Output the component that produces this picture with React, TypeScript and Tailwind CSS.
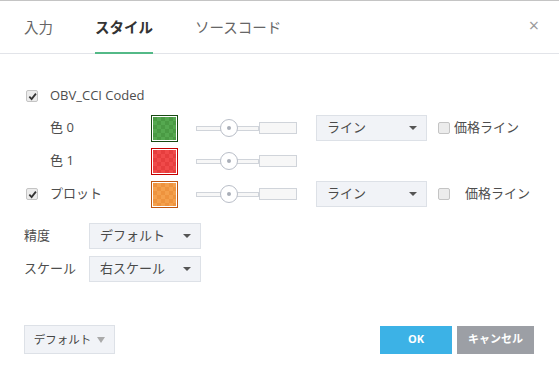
import { useState } from 'react';

const font = 'font-["Open_Sans","Noto_Sans_CJK_JP",sans-serif]';

function Check({ checked }: { checked: boolean }) {
  return (
    <span className="flex h-[12px] w-[12px] items-center justify-center rounded-[2px] border border-[#c4c4c4] bg-[#ececec]">
      {checked && (
        <svg width="9" height="9" viewBox="0 0 10 10">
          <path d="M1.5 5.2 L4 7.8 L8.8 1.8" fill="none" stroke="#333" strokeWidth="2" />
        </svg>
      )}
    </span>
  );
}

function Caret() {
  return <span className="h-0 w-0 border-x-[4px] border-t-[4px] border-x-transparent border-t-[#555]" />;
}

function Select({ label, width }: { label: string; width: string }) {
  return (
    <div
      className={`flex h-[26px] ${width} items-center justify-between border border-[#dde1e7] bg-[#f1f3f7] pl-[10px] pr-[9px] text-[13px] text-[#4a4a4a]`}
    >
      <span>{label}</span>
      <Caret />
    </div>
  );
}

function Slider() {
  return (
    <div className="relative flex h-[20px] w-[101px] items-center">
      <div className="h-[5px] w-[63px] border border-[#d0d4da] bg-[#f7f7f7]" />
      <div className="h-[12px] flex-1 border border-[#d0d4da] bg-[#f7f7f7]" />
      <div className="absolute left-[24px] top-[1px] flex h-[18px] w-[18px] items-center justify-center rounded-full border border-[#b9bec8] bg-white">
        <span className="h-[4px] w-[4px] rounded-full bg-[#a9aeb8]" />
      </div>
    </div>
  );
}

function Swatch({ a, b, border }: { a: string; b: string; border: string }) {
  return (
    <div className={`h-[27px] w-[27px] border ${border} bg-white p-[1px]`}>
      <div className={`h-full w-full ${a} ${b} bg-[length:8px_8px]`} />
    </div>
  );
}

interface Row {
  label: string;
  check?: boolean;
  swatch: { a: string; b: string; border: string };
  select?: boolean;
  priceGap?: boolean;
}

const rows: Row[] = [
  {
    label: '色 0',
    swatch: {
      a: 'bg-[#4b9d46]',
      b: 'bg-[conic-gradient(#55a850_25%,#4a9a44_0_50%,#55a850_0_75%,#4a9a44_0)]',
      border: 'border-[#174a12]',
    },
    select: true,
  },
  {
    label: '色 1',
    swatch: {
      a: 'bg-[#ee4545]',
      b: 'bg-[conic-gradient(#f04a4a_25%,#e63e3e_0_50%,#f04a4a_0_75%,#e63e3e_0)]',
      border: 'border-[#c40000]',
    },
  },
  {
    label: 'プロット',
    check: true,
    swatch: {
      a: 'bg-[#f29a45]',
      b: 'bg-[conic-gradient(#f4a04c_25%,#ee933e_0_50%,#f4a04c_0_75%,#ee933e_0)]',
      border: 'border-[#c0560f]',
    },
    select: true,
    priceGap: true,
  },
];

export default function App() {
  const [tab] = useState(1);
  const tabs = ['入力', 'スタイル', 'ソースコード'];

  return (
    <div className={`${font} h-[380px] w-[559px] border-t border-[#c4c4c4] bg-white text-[#4d4d4d]`}>
      {/* header */}
      <div className="flex h-[53px] items-stretch border-b border-[#e2e4e9] pl-[24px] pr-[20px]">
        {tabs.map((t, i) => (
          <div
            key={t}
            className={`mr-[42px] flex items-center border-b-2 pt-[2px] text-[14.5px] ${
              i === tab ? 'border-[#53b987] font-bold text-[#333]' : 'border-transparent text-[#666]'
            } -mb-px`}
          >
            {t}
          </div>
        ))}
        <div className="ml-auto flex items-center pb-[3px] text-[18px] text-[#9a9a9a]">×</div>
      </div>

      {/* body */}
      <div className="pl-[26px] pt-[35px] text-[13px]">
        <div className="flex h-[14px] items-center">
          <Check checked />
          <span className="ml-[12px]">OBV_CCI Coded</span>
        </div>

        <div className="mt-[12px] flex flex-col gap-[7px]">
          {rows.map((r) => (
            <div key={r.label} className="flex h-[26px] items-center">
              <div className="w-[24px]">{r.check && <Check checked />}</div>
              <span className="w-[101px]">{r.label}</span>
              <Swatch {...r.swatch} />
              <div className="ml-[18px]">
                <Slider />
              </div>
              {r.select && (
                <>
                  <div className="ml-[19px]">
                    <Select label="ライン" width="w-[111px]" />
                  </div>
                  <div className="ml-[11px]">
                    <Check checked={false} />
                  </div>
                  <span className={r.priceGap ? 'ml-[15px]' : 'ml-[4px]'}>価格ライン</span>
                </>
              )}
            </div>
          ))}
        </div>
      </div>

      <div className="mt-[16px] flex flex-col gap-[7px] pl-[24px] text-[13px]">
        <div className="flex items-center">
          <span className="w-[65px]">精度</span>
          <Select label="デフォルト" width="w-[112px]" />
        </div>
        <div className="flex items-center">
          <span className="w-[65px]">スケール</span>
          <Select label="右スケール" width="w-[112px]" />
        </div>
      </div>

      {/* footer */}
      <div className="mt-[43px] flex items-center pl-[24px] pr-[25px]">
        <div className="flex h-[29px] w-[91px] items-center justify-center gap-[6px] border border-[#dde1e7] bg-[#f1f3f7] text-[11.5px] text-[#444]">
          <span>デフォルト</span>
          <span className="h-0 w-0 border-x-[4px] border-t-[6px] border-x-transparent border-t-[#aaa]" />
        </div>
        <div className="ml-auto flex gap-[5px] text-[11px] font-bold text-white">
          <div className="flex h-[28px] w-[72px] items-center justify-center bg-[#3cb2e6]">OK</div>
          <div className="flex h-[28px] w-[77px] items-center justify-center bg-[#9c9fa5]">キャンセル</div>
        </div>
      </div>
    </div>
  );
}
